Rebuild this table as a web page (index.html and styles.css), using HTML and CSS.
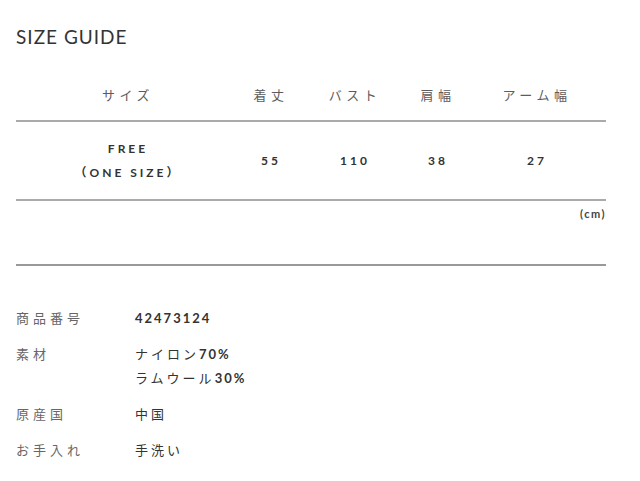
FILE: index.html
```html
<!DOCTYPE html>
<html lang="ja">
<head>
<meta charset="utf-8">
<link rel="stylesheet" href="styles.css">
</head>
<body>
<div class="page">
  <h2 class="title">SIZE GUIDE</h2>
  <table class="size-table">
    <colgroup>
      <col class="c1"><col class="c2"><col class="c3"><col class="c4"><col class="c5">
    </colgroup>
    <thead>
      <tr>
        <th>サイズ</th><th>着丈</th><th>バスト</th><th>肩幅</th><th>アーム幅</th>
      </tr>
    </thead>
    <tbody>
      <tr>
        <td class="size-name"><span>FREE</span><span>（ONE SIZE）</span></td>
        <td>55</td><td>110</td><td>38</td><td>27</td>
      </tr>
    </tbody>
  </table>
  <div class="unit">(cm)</div>
  <div class="divider"></div>
  <dl class="details">
    <div class="row"><dt>商品番号</dt><dd>42473124</dd></div>
    <div class="row"><dt>素材</dt><dd><span class="jp">ナイロン</span>70%<br><span class="jp">ラムウール</span>30%</dd></div>
    <div class="row"><dt>原産国</dt><dd><span class="jp">中国</span></dd></div>
    <div class="row"><dt>お手入れ</dt><dd><span class="jp">手洗い</span></dd></div>
  </dl>
</div>
</body>
</html>
```
FILE: styles.css
```css
html, body {
  margin: 0;
  padding: 0;
  background: #fff;
}
body {
  font-family: "Lato", "Noto Sans CJK JP", sans-serif;
  color: #333;
}
.page {
  padding: 24px 34px 0 16px;
}
.title {
  margin: 0;
  font-size: 19px;
  font-weight: 400;
  letter-spacing: 1px;
  color: #333;
  line-height: 26px;
}
.size-table {
  width: 590px;
  margin-top: 18px;
  border-collapse: collapse;
  table-layout: fixed;
}
.c1 { width: 224px; }
.c2 { width: 62px; }
.c3 { width: 106px; }
.c4 { width: 60px; }
.c5 { width: 138px; }
.size-table th {
  font-family: "Noto Sans CJK JP", sans-serif;
  font-weight: 400;
  font-size: 13px;
  letter-spacing: 4.5px;
  color: #5c5c5c;
  height: 52px;
  padding: 0;
  text-align: center;
  border-bottom: 2px solid #aaa;
  vertical-align: middle;
}
.size-table td {
  font-size: 12px;
  font-weight: 700;
  letter-spacing: 3px;
  color: #333;
  height: 77px;
  padding: 0;
  text-align: center;
  border-bottom: 2px solid #aaa;
  vertical-align: middle;
}
.size-name span {
  display: block;
  line-height: 24px;
}
.unit {
  text-align: right;
  font-size: 11px;
  font-weight: 700;
  letter-spacing: 1.5px;
  color: #444;
  padding-top: 4px;
  line-height: 18px;
}
.divider {
  margin-top: 41px;
  border-top: 2px solid #999;
  width: 590px;
}
.details {
  margin: 40px 0 0;
}
.details .row {
  display: flex;
  margin-bottom: 12px;
}
.details dt {
  width: 119px;
  font-family: "Noto Sans CJK JP", sans-serif;
  font-size: 13px;
  letter-spacing: 4px;
  color: #666;
  line-height: 24px;
}
.details dd {
  margin: 0;
  font-family: "Lato", "Noto Sans CJK JP", sans-serif;
  font-size: 13px;
  font-weight: 700;
  letter-spacing: 2px;
  color: #333;
  line-height: 24px;
}
.details .jp {
  font-family: "Noto Sans CJK JP", sans-serif;
  font-weight: 400;
  letter-spacing: 3px;
}
```
